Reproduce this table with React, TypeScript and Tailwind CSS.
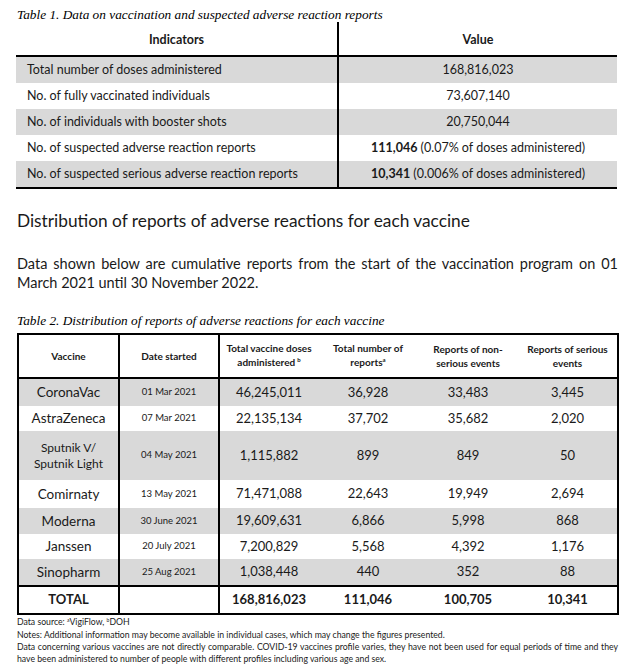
import React from "react";

const serif = { fontFamily: '"Liberation Serif", "Times New Roman", serif' };

type Row = {
  name: React.ReactNode;
  date: string;
  doses: string;
  total: string;
  non: string;
  serious: string;
  gray: boolean;
  h: string;
};

const rows: Row[] = [
  { name: "CoronaVac", date: "01 Mar 2021", doses: "46,245,011", total: "36,928", non: "33,483", serious: "3,445", gray: true, h: "h-[27px]" },
  { name: "AstraZeneca", date: "07 Mar 2021", doses: "22,135,134", total: "37,702", non: "35,682", serious: "2,020", gray: false, h: "h-[25px]" },
  {
    name: (
      <span className="text-[12px] leading-[16px] block">
        Sputnik V/
        <br />
        Sputnik Light
      </span>
    ),
    date: "04 May 2021",
    doses: "1,115,882",
    total: "899",
    non: "849",
    serious: "50",
    gray: true,
    h: "h-[49px]",
  },
  { name: "Comirnaty", date: "13 May 2021", doses: "71,471,088", total: "22,643", non: "19,949", serious: "2,694", gray: false, h: "h-[28px]" },
  { name: "Moderna", date: "30 June 2021", doses: "19,609,631", total: "6,866", non: "5,998", serious: "868", gray: true, h: "h-[26px]" },
  { name: "Janssen", date: "20 July 2021", doses: "7,200,829", total: "5,568", non: "4,392", serious: "1,176", gray: false, h: "h-[25px]" },
  { name: "Sinopharm", date: "25 Aug 2021", doses: "1,038,448", total: "440", non: "352", serious: "88", gray: true, h: "h-[26px]" },
];

const t1 = [
  { label: "Total number of doses administered", value: <span>168,816,023</span>, gray: true },
  { label: "No. of fully vaccinated individuals", value: <span>73,607,140</span>, gray: false },
  { label: "No. of individuals with booster shots", value: <span>20,750,044</span>, gray: true },
  {
    label: "No. of suspected adverse reaction reports",
    value: (
      <span>
        <b>111,046</b> (0.07% of doses administered)
      </span>
    ),
    gray: false,
  },
  {
    label: "No. of suspected serious adverse reaction reports",
    value: (
      <span>
        <b>10,341</b> (0.006% of doses administered)
      </span>
    ),
    gray: true,
  },
];

export default function App() {
  return (
    <div
      className="w-[637px] h-[667px] bg-white text-black overflow-hidden"
      style={{ fontFamily: 'Lato, "Open Sans", sans-serif' }}
    >
      {/* Table 1 caption */}
      <div className="pl-[17px] pt-[7px] h-[22px] text-[13.3px] leading-[15px] italic" style={serif}>
        Table 1. Data on vaccination and suspected adverse reaction reports
      </div>

      {/* Table 1 */}
      <div className="ml-[16px] w-[601px] text-[12.5px] text-[#1a1a1a]">
        <div className="flex h-[35px] border-b-2 border-black font-bold text-[12.5px]">
          <div className="w-[321px] flex items-center justify-center pt-[3px]">Indicators</div>
          <div className="flex-1 flex items-center justify-center border-l-2 border-black pt-[3px]">Value</div>
        </div>
        {t1.map((r, i) => (
          <div key={i} className={`flex h-[26px] ${r.gray ? "bg-[#d9d9d9]" : "bg-white"} ${i === t1.length - 1 ? "border-b-2 border-black h-[28px]" : ""}`}>
            <div className="w-[321px] flex items-center pl-[11px]">{r.label}</div>
            <div className="flex-1 flex items-center justify-center border-l-2 border-black">{r.value}</div>
          </div>
        ))}
      </div>

      {/* Heading */}
      <div className="pl-[17px] mt-[21px] text-[17.3px] leading-[22px] text-[#1a1a1a]">
        Distribution of reports of adverse reactions for each vaccine
      </div>

      {/* Paragraph */}
      <div className="pl-[17px] w-[618px] mt-[22px] text-[14.5px] leading-[19px] text-[#1a1a1a]">
        <div className="text-justify [text-align-last:justify]">
          Data shown below are cumulative reports from the start of the vaccination program on 01
        </div>
        <div>March 2021 until 30 November 2022.</div>
      </div>

      {/* Table 2 caption */}
      <div className="pl-[17px] mt-[21px] text-[13.3px] leading-[15px] italic" style={serif}>
        Table 2. Distribution of reports of adverse reactions for each vaccine
      </div>

      {/* Table 2 */}
      <div className="ml-[17px] mt-[5px] w-[602px] border-2 border-black text-[#1a1a1a]">
        {/* header */}
        <div className="flex h-[44px] border-b-2 border-black font-bold text-[10px] leading-[14px] text-center">
          <div className="w-[99px] flex items-center justify-center">Vaccine</div>
          <div className="w-[100px] flex items-center justify-center border-l-2 border-black">Date started</div>
          <div className="w-[100px] flex items-center justify-center border-l-2 border-black">
            <div>
              Total vaccine doses
              <br />
              administered<span className="text-[6px] relative -top-[4px] ml-[2px]">b</span>
            </div>
          </div>
          <div className="w-[100px] flex items-center justify-center">
            <div>
              Total number of
              <br />
              reports<span className="text-[6px] relative -top-[4px]">a</span>
            </div>
          </div>
          <div className="w-[100px] flex items-center justify-center">
            <div>
              Reports of non-
              <br />
              serious events
            </div>
          </div>
          <div className="flex-1 flex items-center justify-center">
            <div>
              Reports of serious
              <br />
              events
            </div>
          </div>
        </div>
        {rows.map((r, i) => (
          <div key={i} className={`flex ${r.h} ${r.gray ? "bg-[#d9d9d9]" : "bg-white"} text-center`}>
            <div className="w-[99px] flex items-center justify-center text-[13.5px]">{r.name}</div>
            <div className="w-[100px] flex items-center justify-center border-l-2 border-black text-[9.5px]">{r.date}</div>
            <div className="w-[100px] flex items-center justify-center border-l-2 border-black text-[13px]">{r.doses}</div>
            <div className="w-[100px] flex items-center justify-center text-[13px]">{r.total}</div>
            <div className="w-[100px] flex items-center justify-center text-[13px]">{r.non}</div>
            <div className="flex-1 flex items-center justify-center text-[13px]">{r.serious}</div>
          </div>
        ))}
        <div className="flex h-[28px] border-t-2 border-black bg-white font-bold text-[13px] text-center">
          <div className="w-[99px] flex items-center justify-center">TOTAL</div>
          <div className="w-[100px] flex items-center justify-center border-l-2 border-black"></div>
          <div className="w-[100px] flex items-center justify-center border-l-2 border-black">168,816,023</div>
          <div className="w-[100px] flex items-center justify-center">111,046</div>
          <div className="w-[100px] flex items-center justify-center">100,705</div>
          <div className="flex-1 flex items-center justify-center">10,341</div>
        </div>
      </div>

      {/* Footnotes */}
      <div className="pl-[17px] w-[618px] text-[8.7px] leading-[12px] text-[#1a1a1a]">
        <div className="mt-[1px]">
          Data source: <span className="text-[5px] relative -top-[3px]">a</span>VigiFlow, <span className="text-[5px] relative -top-[3px]">b</span>DOH
        </div>
        <div>
          Notes: Additional information may become available in individual cases, which may change the figures presented.
        </div>
        <div className="text-justify [text-align-last:justify]">
          Data concerning various vaccines are not directly comparable. COVID-19 vaccines profile varies, they have not been used for equal periods of time and they
        </div>
        <div>have been administered to number of people with different profiles including various age and sex.</div>
      </div>
    </div>
  );
}
